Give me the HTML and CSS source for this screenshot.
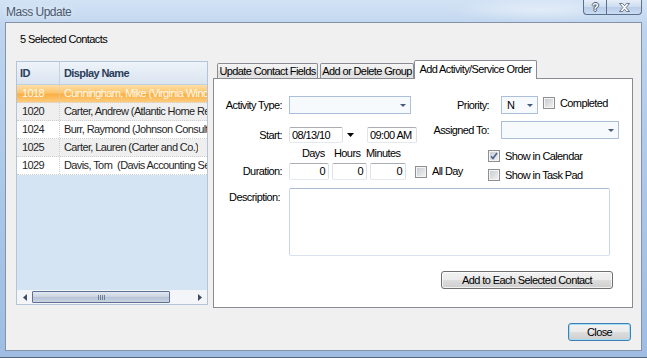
FILE: index.html
```html
<!DOCTYPE html>
<html>
<head>
<meta charset="utf-8">
<title>Mass Update</title>
<link rel="stylesheet" href="styles.css">
</head>
<body>
<div class="window">
  <div class="titlebar">
    <div class="title">Mass Update</div>
    <div class="caption">
      <div class="cap-btn help"><span class="qmark">?</span></div>
      <div class="cap-btn close">
        <svg width="11" height="9" viewBox="0 0 11 9"><path d="M0.5 0.5h3l2 2.3 2-2.3h3l-3.4 4 3.4 4h-3l-2-2.3-2 2.3h-3l3.4-4z" fill="#fff" stroke="#4a5a72" stroke-width="0.8"/></svg>
      </div>
    </div>
  </div>
  <div class="client">
    <div class="heading">5 Selected Contacts</div>
    <div class="main">
      <div class="grid">
        <div class="grid-head"><div class="gh-id">ID</div><div class="gh-name">Display Name</div></div>
        <div class="row sel"><div class="r-id">1018</div><div class="r-name">Cunningham, Mike (Virginia Windows)</div></div>
        <div class="row alt"><div class="r-id">1020</div><div class="r-name">Carter, Andrew (Atlantic Home Repair)</div></div>
        <div class="row"><div class="r-id">1024</div><div class="r-name">Burr, Raymond (Johnson Consulting)</div></div>
        <div class="row alt"><div class="r-id">1025</div><div class="r-name">Carter, Lauren (Carter and Co.)</div></div>
        <div class="row"><div class="r-id">1029</div><div class="r-name">Davis, Tom&nbsp; (Davis Accounting Services)</div></div>
        <div class="grid-fill"></div>
        <div class="hscroll">
          <div class="sb-arrow"><svg width="4" height="7" viewBox="0 0 4 7"><path d="M4 0v7L0 3.5z" fill="#3d4d66"/></svg></div>
          <div class="sb-thumb"><svg width="7" height="5" viewBox="0 0 7 5"><path d="M0.5 0v5M2.5 0v5M4.5 0v5M6.5 0v5" stroke="#6c7e98" stroke-width="1"/></svg></div>
          <div class="sb-track"></div>
          <div class="sb-arrow"><svg width="4" height="7" viewBox="0 0 4 7"><path d="M0 0v7L4 3.5z" fill="#3d4d66"/></svg></div>
        </div>
      </div>
      <div class="tabs">
        <div class="tabstrip">
          <div class="tab tab1">Update Contact Fields</div>
          <div class="tab tab2">Add or Delete Group</div>
          <div class="tab active">Add Activity/Service Order</div>
        </div>
        <div class="panel">
          <div class="top">
            <div class="lcol">
              <div class="frow r1">
                <div class="lbl">Activity Type:</div>
                <div class="combo combo-act"><svg width="6" height="3" viewBox="0 0 6 3"><path d="M0 0h6L3 3z" fill="#45597a"/></svg></div>
              </div>
              <div class="frow r2">
                <div class="lbl">Start:</div>
                <div class="tbox date">08/13/10</div>
                <div class="ddbtn"><svg width="7" height="4" viewBox="0 0 7 4"><path d="M0 0h7L3.5 4z" fill="#000"/></svg></div>
                <div class="tbox time">09:00 AM</div>
              </div>
              <div class="frow r3">
                <span class="dh">Days</span><span class="dh">Hours</span><span class="dh">Minutes</span>
              </div>
              <div class="frow r4">
                <div class="lbl">Duration:</div>
                <div class="tbox num n1">0</div>
                <div class="tbox num n2">0</div>
                <div class="tbox num n3">0</div>
                <div class="cb allday"></div><span>All Day</span>
              </div>
            </div>
            <div class="rcol">
              <div class="frow r1">
                <div class="rlbl">Priority:</div>
                <div class="combo prio"><span>N</span><svg width="6" height="3" viewBox="0 0 6 3"><path d="M0 0h6L3 3z" fill="#45597a"/></svg></div>
                <div class="cbwrap"><div class="cb"></div><span>Completed</span></div>
              </div>
              <div class="frow r-assign">
                <div class="rlbl">Assigned To:</div>
                <div class="combo combo-assign"><svg width="6" height="3" viewBox="0 0 6 3"><path d="M0 0h6L3 3z" fill="#45597a"/></svg></div>
              </div>
              <div class="cbrow c1">
                <div class="cb checked"><svg width="8" height="8" viewBox="0 0 8 8"><path d="M1 4.2l2 2.3L7 1" fill="none" stroke="#4b5f8f" stroke-width="1.6"/></svg></div><span>Show in Calendar</span>
              </div>
              <div class="cbrow c2">
                <div class="cb"></div><span>Show in Task Pad</span>
              </div>
            </div>
          </div>
          <div class="desc">
            <div class="lbl-desc">Description:</div>
            <div class="textarea"></div>
          </div>
          <div class="btnrow">
            <button class="btn btn-add">Add to Each Selected Contact</button>
          </div>
        </div>
      </div>
    </div>
    <div class="footer">
      <button class="btn btn-close">Close</button>
    </div>
  </div>
</div>
</body>
</html>
```
FILE: styles.css
```css
* { box-sizing: border-box; }
html, body { margin: 0; padding: 0; }
body {
  width: 647px;
  height: 358px;
  overflow: hidden;
  font-family: "Liberation Sans", Arial, sans-serif;
  font-size: 11px;
  line-height: 13px;
  letter-spacing: -0.6px;
  color: #000;
}
.window {
  height: 358px;
  display: flex;
  flex-direction: column;
  background: linear-gradient(180deg, #d3e3f5 0%, #bed4ee 8%, #a9c5e7 60%, #9fbde3 100%);
  border-bottom: 1px solid #55657c;
}
.titlebar {
  height: 22px;
  flex-shrink: 0;
  display: flex;
  align-items: flex-start;
  background: radial-gradient(ellipse 90px 12px at 540px 10px, rgba(255,255,255,0.45), rgba(255,255,255,0));
}
.title {
  padding: 5px 0 0 6px;
  font-size: 12px;
  line-height: 14px;
  color: #4b596d;
  letter-spacing: -0.5px;
  text-shadow: 0 0 6px rgba(255,255,255,0.9);
}
.caption { margin-left: auto; margin-right: 5px; display: flex; }
.cap-btn {
  height: 15px;
  border: 1px solid #5b6f8e;
  border-top: none;
  background: linear-gradient(#e6eef8, #cddcef 50%, #b9cde8 51%, #cadcf1);
  display: flex;
  align-items: center;
  justify-content: center;
}
.help { width: 23px; border-radius: 0 0 0 4px; border-right: none; }
.close { width: 36px; border-radius: 0 0 4px 0; }
.qmark {
  font-weight: bold;
  font-size: 11px;
  color: #fff;
  text-shadow: 1px 0 0 #4a5a72, -1px 0 0 #4a5a72, 0 1px 0 #4a5a72, 0 -1px 0 #4a5a72;
}
.client {
  margin: 0 5px;
  height: 329px;
  flex-shrink: 0;
  border: 1px solid #8593a8;
  background: #f0f0f0;
  display: flex;
  flex-direction: column;
}
.heading { height: 38px; padding: 10px 0 0 14px; flex-shrink: 0; }
.main {
  display: flex;
  align-items: flex-start;
  padding-left: 10px;
  height: 247px;
  flex-shrink: 0;
}
/* grid */
.grid {
  width: 192px;
  height: 244px;
  flex-shrink: 0;
  border: 1px solid #b3c4d8;
  background: #d5e4f2;
  display: flex;
  flex-direction: column;
  overflow: hidden;
}
.grid-head {
  height: 23px;
  flex-shrink: 0;
  display: flex;
  align-items: stretch;
  background: linear-gradient(#eef3f9, #dae4f0);
  border-bottom: 1px solid #c3d0df;
  font-weight: bold;
  color: #2b3d5b;
}
.gh-id { width: 43px; flex-shrink: 0; padding-left: 3px; border-right: 1px solid #c5d2e1; display: flex; align-items: center; }
.gh-name { padding-left: 4px; display: flex; align-items: center; white-space: nowrap; }
.row {
  height: 18px;
  flex-shrink: 0;
  display: flex;
  align-items: stretch;
  border-bottom: 1px dotted #cfcfcf;
  white-space: nowrap;
  background: #fff;
  color: #1f1f1f;
}
.row.alt { background: #efefef; }
.row.sel {
  background: linear-gradient(#fedfa8 0%, #fcc56c 45%, #fab043 55%, #fdcb7d 100%);
  color: #fff8ec;
}
.r-id { width: 43px; flex-shrink: 0; padding-left: 5px; border-right: 1px dotted #cfcfcf; display: flex; align-items: center; }
.r-name { padding-left: 4px; display: flex; align-items: center; overflow: hidden; }
.grid-fill { flex: 1; }
.hscroll {
  height: 14px;
  flex-shrink: 0;
  display: flex;
  align-items: center;
  background: #f3f5f8;
}
.sb-arrow { width: 15px; height: 14px; flex-shrink: 0; display: flex; align-items: center; justify-content: center; }
.sb-thumb {
  width: 138px;
  height: 12px;
  flex-shrink: 0;
  border: 1px solid #5d7293;
  border-radius: 1px;
  background: linear-gradient(#e2e8f1, #c9d3e1 50%, #b6c3d5 51%, #cbd5e3);
  display: flex;
  align-items: center;
  justify-content: center;
}
.sb-track { flex: 1; }
/* tabs */
.tabs {
  width: 420px;
  margin-left: 5px;
  margin-top: -2px;
  flex-shrink: 0;
  display: flex;
  flex-direction: column;
}
.tabstrip {
  height: 20px;
  display: flex;
  align-items: flex-end;
  padding-left: 4px;
  margin-bottom: -1px;
  position: relative;
  z-index: 1;
}
.tab {
  height: 15px;
  margin-bottom: 1px;
  border: 1px solid #898c95;
  border-bottom: none;
  border-radius: 2px 2px 0 0;
  background: linear-gradient(#f4f4f4, #ebebeb 50%, #dedede 51%, #e3e3e3);
  display: flex;
  align-items: center;
  justify-content: center;
  white-space: nowrap;
}
.tab1 { width: 101px; margin-right: 2px; }
.tab2 { width: 94px; }
.tab.active {
  width: 123px;
  height: 19px;
  margin-bottom: 0;
  background: #fff;
  align-items: flex-start;
  padding-top: 2px;
}
.panel {
  height: 230px;
  border: 1px solid #898c95;
  background: #fff;
}
.top { display: flex; align-items: flex-start; }
.lcol { width: 206px; flex-shrink: 0; }
.rcol { flex: 1; }
.frow { display: flex; align-items: center; white-space: nowrap; }
.lbl { width: 68px; flex-shrink: 0; text-align: right; margin-right: 7px; }
.r1 { margin-top: 17px; height: 18px; }
.combo {
  height: 18px;
  flex-shrink: 0;
  border: 1px solid #abbfd8;
  background: #f7fafd;
  display: flex;
  align-items: center;
  justify-content: flex-end;
  padding-right: 4px;
}
.combo svg { display: block; }
.combo-act { width: 122px; }
.r2 { margin-top: 13px; height: 16px; }
.tbox {
  height: 16px;
  flex-shrink: 0;
  border: 1px solid;
  border-color: #abadb3 #dbdfe6 #e3e9ef #e2e3ea;
  border-radius: 2px;
  background: #fff;
  display: flex;
  align-items: center;
  padding: 0 2px;
}
.date { width: 54px; }
.ddbtn { width: 14px; height: 16px; flex-shrink: 0; display: flex; align-items: center; justify-content: center; margin-right: 10px; }
.time { width: 50px; }
.r3 { margin-top: 4px; height: 13px; padding-left: 88px; }
.dh { display: inline-block; width: 32px; }
.r4 { margin-top: 3px; height: 17px; }
.num { height: 17px; justify-content: flex-end; padding-right: 3px; }
.n1 { width: 40px; margin-right: 3px; }
.n2 { width: 35px; margin-right: 3px; }
.n3 { width: 36px; margin-right: 9px; }
.cb {
  width: 12px;
  height: 12px;
  flex-shrink: 0;
  border: 1px solid #8e8f8f;
  background: linear-gradient(135deg, #c4c8ce, #f4f4f4);
  box-shadow: inset 0 0 0 1px #f4f4f4;
  margin-right: 5px;
  display: flex;
  align-items: center;
  justify-content: center;
}
.rlbl { width: 69px; flex-shrink: 0; text-align: right; margin-right: 12px; }
.prio { width: 37px; justify-content: space-between; padding-left: 5px; }
.cbwrap { display: flex; align-items: center; height: 12px; margin-left: 5px; align-self: flex-start; margin-top: 1px; }
.r-assign { margin-top: 7px; height: 18px; }
.combo-assign { width: 118px; }
.cbrow { display: flex; align-items: center; height: 12px; padding-left: 68px; white-space: nowrap; }
.c1 { margin-top: 11px; }
.c2 { margin-top: 7px; }
.desc { display: flex; align-items: flex-start; margin-top: 7px; }
.lbl-desc { width: 66px; flex-shrink: 0; text-align: right; margin-right: 9px; margin-top: 3px; }
.textarea {
  width: 321px;
  height: 68px;
  border: 1px solid;
  border-color: #a9bcd4 #c9d7e8 #d9e3ef #c9d7e8;
  border-radius: 2px;
  background: #fff;
}
.btnrow { display: flex; justify-content: flex-end; margin-top: 15px; padding-right: 19px; }
.btn {
  height: 18px;
  border: 1px solid #707070;
  border-radius: 3px;
  background: linear-gradient(#f2f2f2 0%, #ebebeb 50%, #dddddd 51%, #cfcfcf 100%);
  box-shadow: inset 0 0 0 1px rgba(255,255,255,0.7);
  font: inherit;
  letter-spacing: inherit;
  color: #000;
  padding: 0;
  display: flex;
  align-items: center;
  justify-content: center;
}
.btn-add { width: 172px; }
.footer { display: flex; justify-content: flex-end; padding: 15px 10px 0 0; }
.btn-close { width: 63px; border-color: #3c7fb1; box-shadow: inset 0 0 0 1px #a6dcf5; }
```
